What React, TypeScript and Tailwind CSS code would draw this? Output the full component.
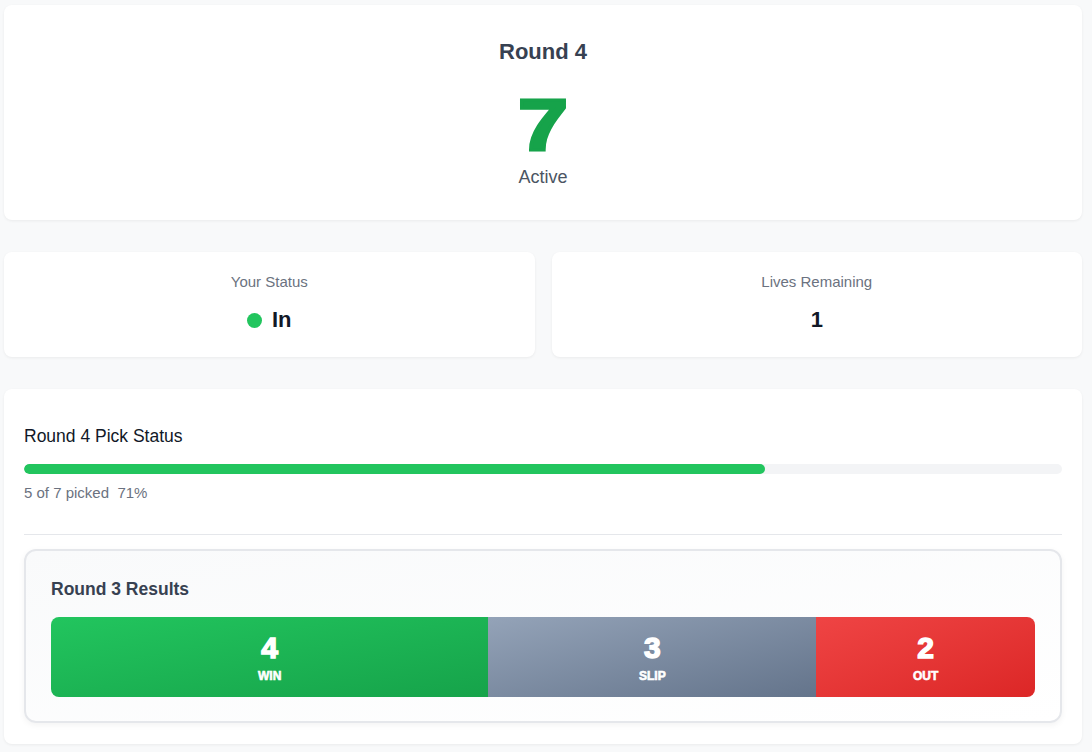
import React from 'react';

const results = [
  { label: 'WIN', value: 4, cls: 'bg-gradient-to-br from-[#22c55e] to-[#16a34a]' },
  { label: 'SLIP', value: 3, cls: 'bg-gradient-to-br from-[#94a3b8] to-[#64748b]' },
  { label: 'OUT', value: 2, cls: 'bg-gradient-to-br from-[#ef4444] to-[#dc2626]' },
];

export default function App() {
  const picked = 5;
  const total = 7;
  const pct = Math.round((picked / total) * 100);
  const sum = results.reduce((a, r) => a + r.value, 0);

  return (
    <div className="min-h-screen bg-[#f8f9fa] pl-[4px] pr-[10px] pt-[5px] pb-[6px] font-['Liberation_Sans',Arial,sans-serif]">
      {/* Round header */}
      <div className="bg-white rounded-lg shadow-[0_1px_3px_rgba(0,0,0,0.06)] h-[215px] flex flex-col items-center pt-[33px]">
        <h2 className="text-[22px] leading-[28px] font-bold text-[#374151]">Round 4</h2>
        <div className="text-[72px] leading-[72px] font-bold text-[#16a34a] mt-[23px] scale-x-[1.25] [-webkit-text-stroke:3px_#16a34a]">7</div>
        <div className="text-[18px] leading-[22px] text-[#4b5563] mt-[5px]">Active</div>
      </div>

      {/* Status cards */}
      <div className="grid grid-cols-2 gap-[17px] mt-[32px]">
        <div className="bg-white rounded-lg shadow-[0_1px_3px_rgba(0,0,0,0.06)] h-[105px] flex flex-col items-center pt-[21px]">
          <span className="text-[15px] leading-[18px] text-[#6b7280]">Your Status</span>
          <div className="flex items-center gap-[10px] mt-[15px]">
            <span className="w-[15px] h-[15px] rounded-full bg-[#22c55e]" />
            <span className="text-[22px] leading-[28px] font-bold text-[#111827]">In</span>
          </div>
        </div>
        <div className="bg-white rounded-lg shadow-[0_1px_3px_rgba(0,0,0,0.06)] h-[105px] flex flex-col items-center pt-[21px]">
          <span className="text-[15px] leading-[18px] text-[#6b7280]">Lives Remaining</span>
          <span className="text-[22px] leading-[28px] font-bold text-[#111827] mt-[15px]">1</span>
        </div>
      </div>

      {/* Pick status */}
      <div className="bg-white rounded-lg shadow-[0_1px_3px_rgba(0,0,0,0.06)] mt-[32px] px-[20px] pt-[35px] pb-[21px]">
        <h3 className="text-[17.5px] leading-[24px] text-[#111827]">Round 4 Pick Status</h3>
        <div className="mt-[16px] h-[10px] w-full bg-[#f3f4f6] rounded-full overflow-hidden">
          <div className="h-full bg-[#22c55e] rounded-full" style={{ width: `${(picked / total) * 100}%` }} />
        </div>
        <div className="mt-[10px] text-[15px] leading-[18px] text-[#6b7280] whitespace-pre">
          {`${picked} of ${total} picked  ${pct}%`}
        </div>
        <div className="border-t border-[#e5e7eb] mt-[32px]" />

        {/* Previous round results */}
        <div className="mt-[14px] border-2 border-[#e5e7eb] rounded-xl bg-gradient-to-br from-[#f9fafb] to-white shadow-[0_2px_6px_rgba(0,0,0,0.05)] px-[25px] pt-[26px] pb-[24px]">
          <h4 className="text-[17.5px] leading-[24px] font-bold text-[#374151]">Round 3 Results</h4>
          <div className="mt-[16px] flex h-[80px] rounded-lg overflow-hidden">
            {results.map((r) => (
              <div
                key={r.label}
                className={`${r.cls} flex flex-col items-center justify-center text-white pt-[2px]`}
                style={{ width: `${(r.value / sum) * 100}%` }}
              >
                <span className="text-[30px] leading-[30px] font-bold [-webkit-text-stroke:1.5px_white]">{r.value}</span>
                <span className="text-[12px] leading-[16px] font-bold mt-[5px] [-webkit-text-stroke:0.6px_white]">{r.label}</span>
              </div>
            ))}
          </div>
        </div>
      </div>
    </div>
  );
}
